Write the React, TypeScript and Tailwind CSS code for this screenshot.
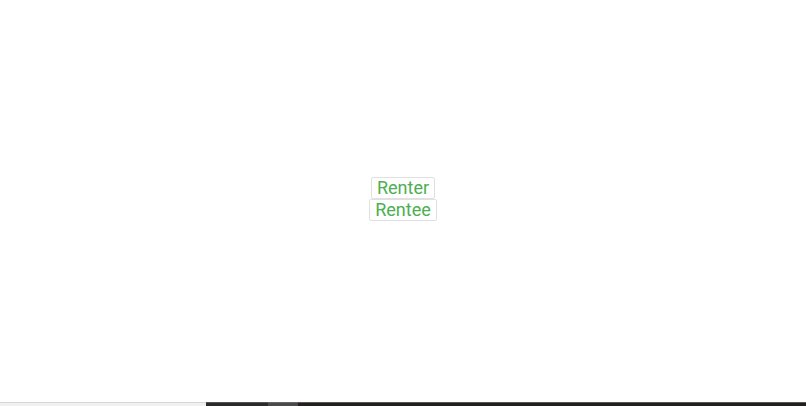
export default function App() {
  return (
    <div className="w-[806px] h-[406px] bg-white flex flex-col overflow-hidden" style={{ fontFamily: 'Roboto, "Noto Sans", sans-serif' }}>
      <div className="flex-1 flex flex-col items-center justify-center pb-[4px]">
        <button className="h-[22px] px-[5px] border border-[#e0e0e0] rounded-[2px] text-[18px] leading-[20px] text-[#4caf50] bg-white">
          Renter
        </button>
        <button className="h-[22px] px-[5px] border border-[#e0e0e0] rounded-[2px] text-[18px] leading-[20px] text-[#4caf50] bg-white">
          Rentee
        </button>
      </div>
      <div className="h-[4px] flex">
        <div className="w-[206px] bg-[#f0f0f0] border-t border-[#d6d6d6]" />
        <div className="w-[62px] bg-[#2a2a2a] border-t border-[#555]" />
        <div className="w-[30px] bg-[#4a4a4a] border-t border-[#666]" />
        <div className="flex-1 bg-[#231f1f] border-t border-[#555]" />
      </div>
    </div>
  );
}
